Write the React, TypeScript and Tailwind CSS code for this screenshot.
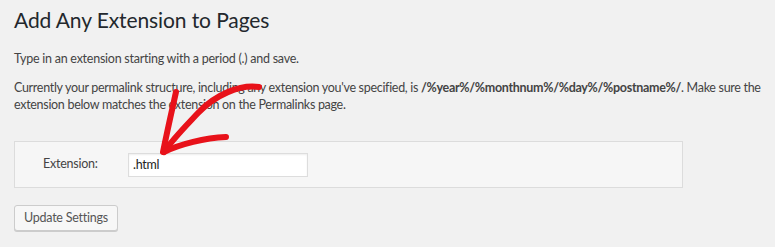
import React from 'react';

const App = () => {
  return (
    <div className="relative w-[775px] h-[247px] overflow-hidden bg-[#f1f1f1] text-[#444] font-['Lato',sans-serif] tracking-[-0.25px]">
      <div className="px-[14px] pt-[6px]">
        <h1 className="text-[21px] leading-[28px] text-[#23282d] font-normal tracking-[-0.1px]">Add Any Extension to Pages</h1>

        <p className="mt-[16px] text-[12.5px] leading-[17px]">Type in an extension starting with a period (.) and save.</p>

        <p className="mt-[12px] w-[761px] text-[12.5px] leading-[17px] tracking-[-0.3px]">
          Currently your permalink structure, including any extension you've specified, is{' '}
          <strong className="font-bold">/%year%/%monthnum%/%day%/%postname%/</strong>. Make sure the
          <br />
          extension below matches the extension on the Permalinks page.
        </p>

        {/* Extension field */}
        <div className="mt-[28px] w-[669px] h-[47px] flex items-center border border-[#dcdcdc] bg-[#f6f6f6]">
          <label className="w-[113px] pl-[28px] text-[12.5px]">Extension:</label>
          <input
            type="text"
            defaultValue=".html"
            className="w-[180px] h-[24px] px-[4px] text-[12.5px] text-[#222] bg-white border border-[#ddd] shadow-[inset_0_1px_2px_rgba(0,0,0,0.07)] outline-none"
          />
        </div>

        <button className="mt-[17px] h-[26px] px-[9px] text-[12.5px] text-[#555] bg-[#f7f7f7] border border-[#ccc] rounded-[3px] shadow-[0_1px_0_#ccc]">
          Update Settings
        </button>
      </div>

      {/* red annotation arrow */}
      <svg className="absolute left-0 top-0 pointer-events-none" width="775" height="247" viewBox="0 0 775 247">
        <g fill="none" stroke="#e8121a" strokeWidth="6" strokeLinecap="round" strokeLinejoin="round">
          <path d="M259 87 C 240 84, 215 95, 198 113 S 172 140, 164 152" />
          <path d="M176 92 C 172 110, 167 132, 163 152" />
          <path d="M226 137 C 205 138, 180 144, 164 152" />
        </g>
      </svg>
    </div>
  );
};

export default App;
